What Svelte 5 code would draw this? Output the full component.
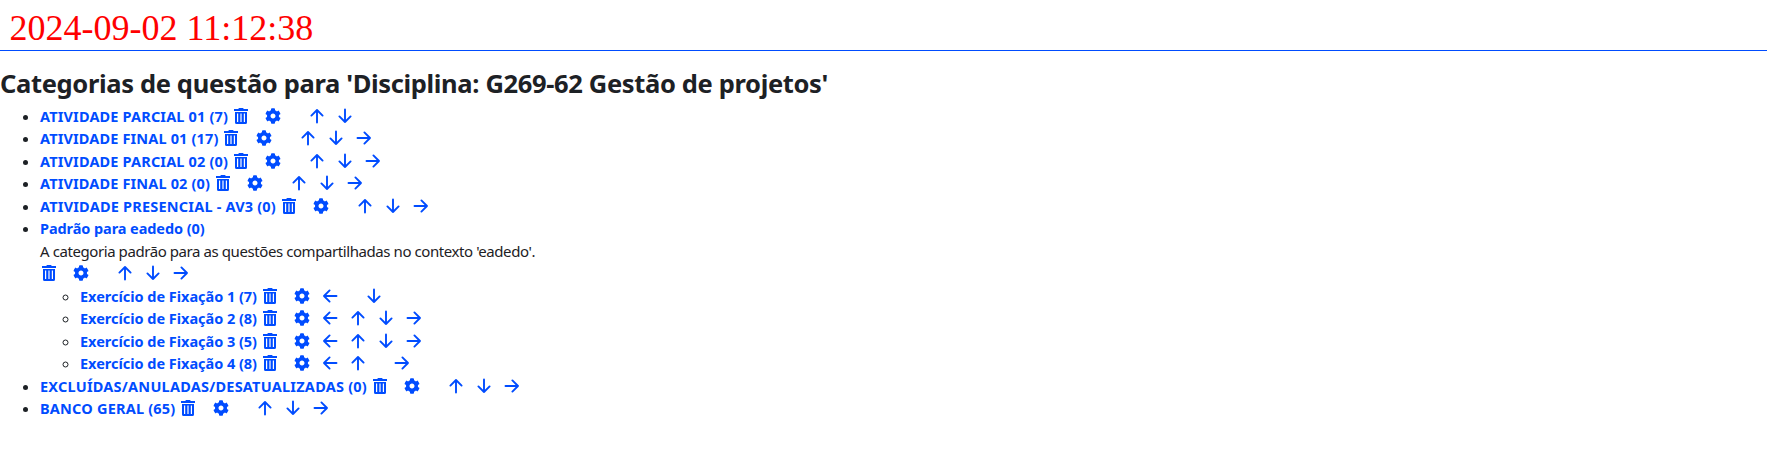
<script>
  const categories = [
    { name: 'ATIVIDADE PARCIAL 01 (7)', width: 188, moves: '-ud' },
    { name: 'ATIVIDADE FINAL 01 (17)', width: 178.5, moves: '-udr' },
    { name: 'ATIVIDADE PARCIAL 02 (0)', width: 188, moves: '-udr' },
    { name: 'ATIVIDADE FINAL 02 (0)', width: 170, moves: '-udr' },
    { name: 'ATIVIDADE PRESENCIAL - AV3 (0)', width: 236, moves: '-udr' },
    {
      name: 'Padrão para eadedo (0)',
      width: 164.5,
      moves: '-udr',
      info: "A categoria padrão para as questões compartilhadas no contexto 'eadedo'.",
      children: [
        { name: 'Exercício de Fixação 1 (7)', width: 177, moves: 'l-d' },
        { name: 'Exercício de Fixação 2 (8)', width: 177, moves: 'ludr' },
        { name: 'Exercício de Fixação 3 (5)', width: 177, moves: 'ludr' },
        { name: 'Exercício de Fixação 4 (8)', width: 177, moves: 'lu-r' }
      ]
    },
    { name: 'EXCLUÍDAS/ANULADAS/DESATUALIZADAS (0)', width: 327, moves: '-udr' },
    { name: 'BANCO GERAL (65)', width: 135.5, moves: '-udr' }
  ];

  const arrows = {
    l: 'M14.5 8H2M7.6 2.4 2 8l5.6 5.6',
    r: 'M1.5 8H14M8.4 2.4 14 8l-5.6 5.6',
    u: 'M8 14.5V2M2.4 7.6 8 2l5.6 5.6',
    d: 'M8 1.5V14M2.4 8.4 8 14l5.6-5.6'
  };

  // Spreads the letters so that the text fills the given width.
  function fit(node, width) {
    const natural = node.getBoundingClientRect().width;
    const gap = (width - natural) / node.textContent.length;
    node.style.letterSpacing = `${gap}px`;
  }
</script>

{#snippet actions(moves)}
  <span class="actions">
    <a class="trash" href="#delete" aria-label="Excluir">
      <svg width="14" height="16" viewBox="0 0 14 16">
        <path d="M0 1h4.200L5 0h4l.8 1H14v2H0z" />
        <path fill-rule="evenodd" d="M1 4h12v10.500a1.500 1.500 0 0 1-1.500 1.500h-9A1.500 1.500 0 0 1 1 14.500zM3 5.500v8.500h1.200V5.500zM6.400 5.500v8.500h1.200V5.500zM9.800 5.500v8.500H11V5.500z" />
      </svg>
    </a>
    <a class="slot" href="#edit" aria-label="Editar">
      <svg width="16" height="16" viewBox="0 0 512 512">
        <path d="M487.400 315.700l-42.600-24.600c4.300-23.200 4.300-47 0-70.200l42.600-24.600c4.900-2.800 7.100-8.600 5.500-14-11.100-35.600-30-67.800-54.700-94.600-3.800-4.100-10-5.100-14.800-2.300L380.800 110c-17.900-15.400-38.500-27.300-60.800-35.100V25.800c0-5.600-3.900-10.500-9.400-11.700-36.700-8.200-74.300-7.800-109.200 0-5.500 1.200-9.400 6.100-9.400 11.700V75c-22.200 7.900-42.800 19.800-60.800 35.100L88.700 85.500c-4.900-2.800-11-1.900-14.800 2.300-24.700 26.700-43.600 58.900-54.700 94.600-1.700 5.400.6 11.200 5.500 14L67.300 221c-4.300 23.200-4.300 47 0 70.200l-42.600 24.600c-4.900 2.800-7.100 8.600-5.500 14 11.100 35.600 30 67.800 54.700 94.600 3.800 4.100 10 5.100 14.800 2.300l42.600-24.600c17.900 15.400 38.500 27.300 60.800 35.100v49.200c0 5.600 3.900 10.500 9.400 11.700 36.700 8.200 74.300 7.800 109.200 0 5.500-1.200 9.400-6.100 9.400-11.700v-49.200c22.200-7.900 42.800-19.800 60.800-35.100l42.600 24.600c4.900 2.800 11 1.900 14.800-2.300 24.700-26.700 43.600-58.900 54.700-94.600 1.500-5.500-.7-11.300-5.600-14.100zM256 336c-44.100 0-80-35.900-80-80s35.900-80 80-80 80 35.900 80 80-35.900 80-80 80z" />
      </svg>
    </a>
    {#each moves.split('') as move}
      {#if move === '-'}
        <span class="spacer"></span>
      {:else}
        <a class="slot" href="#move" aria-label="Mover">
          <svg class="arrow" width="16" height="16" viewBox="0 0 16 16"><path d={arrows[move]} /></svg>
        </a>
      {/if}
    {/each}
  </span>
{/snippet}

{#snippet tree(items)}
  <ul>
    {#each items as item}
      <li>
        <div class="row">
          <span class="label" style="width: {item.width}px"><a href="#category" use:fit={item.width}>{item.name}</a></span>
          {#if !item.info}{@render actions(item.moves)}{/if}
        </div>
        {#if item.info}
          <div class="row"><span use:fit={495}>{item.info}</span></div>
          <div class="row">{@render actions(item.moves)}</div>
        {/if}
        {#if item.children}{@render tree(item.children)}{/if}
      </li>
    {/each}
  </ul>
{/snippet}

<header>2024-09-02 11:12:38</header>
<main>
  <h2><span use:fit={828}>Categorias de questão para 'Disciplina: G269-62 Gestão de projetos'</span></h2>
  {@render tree(categories)}
</main>

<style>
  :global(body) {
    background: #fff;
    overflow: hidden;
  }
  header {
    box-sizing: border-box;
    height: 51px;
    padding: 8px 0 0 9.500px;
    border-bottom: 1px solid #004cff;
    color: #f00;
    font: 36px/41px 'Liberation Serif', serif;
  }
  main {
    padding-top: 16px;
    color: #1d2125;
    font: 15px/22.5px 'Noto Sans', 'Open Sans', sans-serif;
  }
  h2 {
    margin: 0;
    height: 37.750px;
    font-size: 25.500px;
    line-height: 32px;
    font-weight: 700;
    white-space: nowrap;
  }
  ul {
    margin: 0;
    padding-left: 40px;
  }
  .row {
    display: flex;
    height: 22.5px;
    white-space: nowrap;
  }
  .label {
    flex: none;
    margin-right: 4px;
    font-size: 14.500px;
    font-weight: 700;
  }
  a {
    color: #004cff;
    text-decoration: none;
  }
  .actions {
    display: flex;
    align-items: center;
    height: 22px;
  }
  .actions a {
    display: flex;
    align-items: center;
  }
  .trash {
    width: 25.600px;
    padding-left: 1.600px;
  }
  .slot {
    width: 28px;
    justify-content: center;
  }
  .spacer {
    width: 16px;
  }
  svg {
    display: block;
    fill: #004cff;
  }
  .arrow {
    fill: none;
    stroke: #004cff;
    stroke-width: 1.900;
    stroke-linecap: round;
    stroke-linejoin: round;
  }
</style>
